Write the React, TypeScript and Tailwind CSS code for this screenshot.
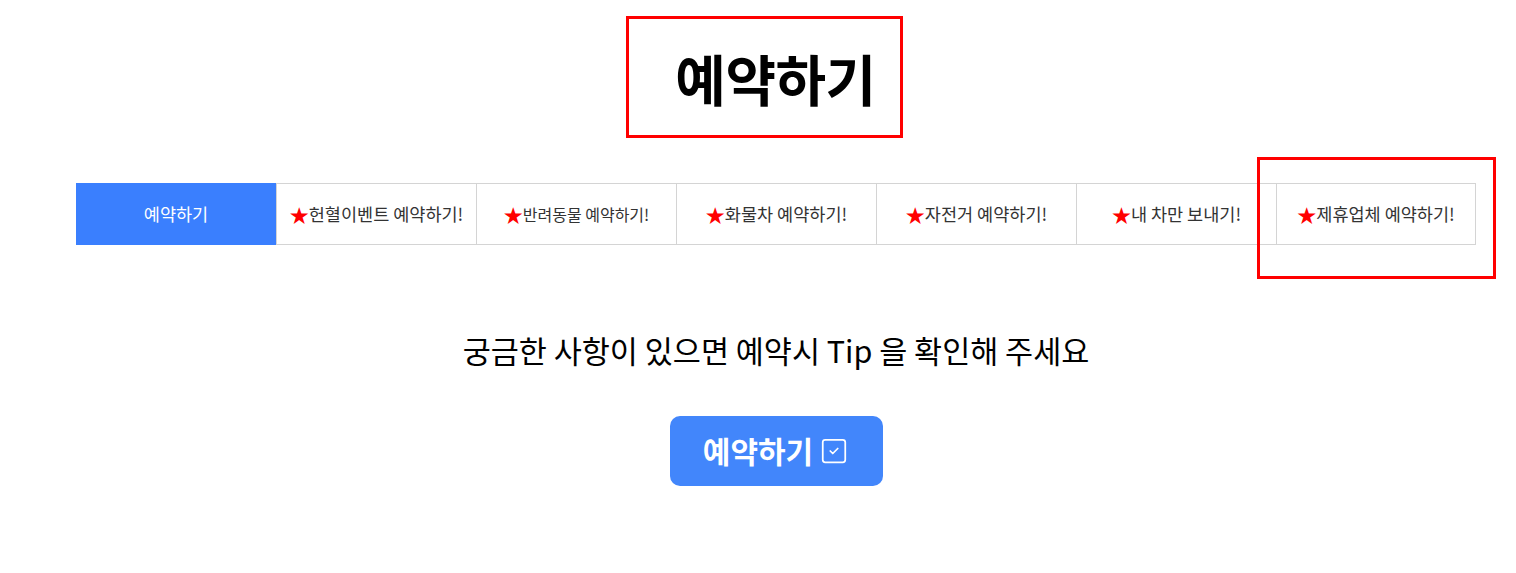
import { SquareCheck } from "lucide-react";

const tabs = [
  { label: "예약하기", star: false },
  { label: "헌혈이벤트 예약하기!", star: true },
  { label: "반려동물 예약하기!", star: true, small: true },
  { label: "화물차 예약하기!", star: true },
  { label: "자전거 예약하기!", star: true },
  { label: "내 차만 보내기!", star: true },
  { label: "제휴업체 예약하기!", star: true },
];

export default function App() {
  return (
    <div className="relative min-h-[573px] bg-white font-['Noto_Sans_CJK_KR','Noto_Sans',sans-serif]">
      <div className="ml-[76px] flex w-[1400px] flex-col items-center">
        <div className="mr-[23px] mt-[16px] flex h-[122px] w-[277px] items-center justify-center border-[3px] border-[#ff0000] pl-[22px]">
          <h1 className="text-[55px] font-bold leading-none tracking-[-0.5px] text-black">예약하기</h1>
        </div>

        <ul className="mt-[45px] grid w-full grid-cols-7">
          {tabs.map((tab, i) => (
            <li
              key={tab.label}
              className={
                i === 0
                  ? "flex h-[62px] items-center justify-center bg-[#3a7ffe] text-[17px] text-white"
                  : "flex h-[62px] items-center justify-center border-y border-l border-[#d4d4d4] text-[#333] last:border-r"
              }
            >
              {tab.star && <span className="text-[19px] leading-none text-[#ff0000]">★</span>}
              <span className={tab.small ? "text-[16px]" : "text-[17.5px]"}>{tab.label}</span>
            </li>
          ))}
        </ul>

        <p className="mt-[90px] text-[30.5px] leading-none text-black">궁금한 사항이 있으면 예약시 Tip 을 확인해 주세요</p>

        <button className="mt-[50px] flex h-[70px] w-[213px] items-center justify-center gap-[6px] rounded-[10px] bg-[#4286fb] text-[30px] font-bold text-white">
          예약하기
          <SquareCheck className="h-[30px] w-[30px]" strokeWidth={1.4} />
        </button>
      </div>

      <div className="absolute left-[1257px] top-[157px] h-[122px] w-[239px] border-[3px] border-[#ff0000]" />
    </div>
  );
}
